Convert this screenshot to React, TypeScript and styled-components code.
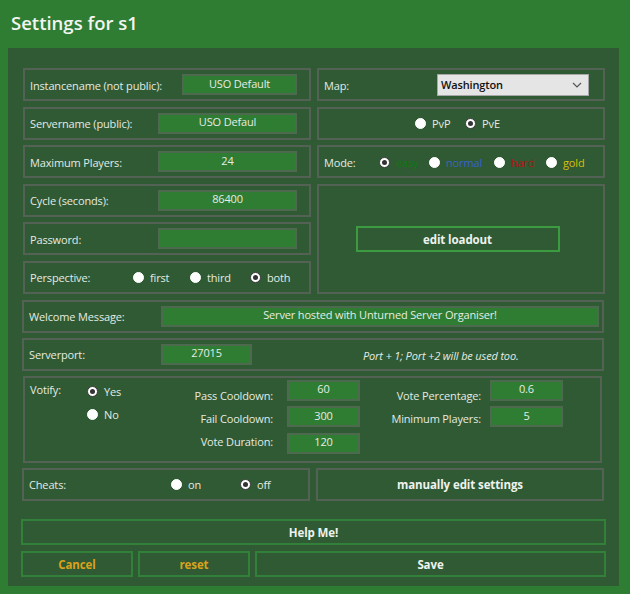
import React from "react";
import styled, { createGlobalStyle } from "styled-components";

const GlobalStyle = createGlobalStyle`
  html, body { margin: 0; padding: 0; }
  body {
    background: #2e7d32;
    font-family: "Open Sans", "Noto Sans", sans-serif;
    font-size: 11px;
    letter-spacing: -0.15px;
    color: #e4ebe4;
  }
`;

const Page = styled.div`
  width: 630px;
  height: 594px;
  display: flex;
  flex-direction: column;
`;

const Header = styled.div`
  height: 48px;
  display: flex;
  align-items: center;
  padding-left: 11px;
  box-sizing: border-box;
`;

const Title = styled.h1`
  margin: 0;
  font-size: 18.5px;
  font-weight: 600;
  letter-spacing: 0;
  color: #f2f5f2;
  padding-bottom: 4px;
`;

const Panel = styled.div`
  margin: 0 11px 0 8px;
  height: 538px;
  background: #2f5a33;
  padding: 20px 15px 0 14px;
  box-sizing: border-box;
  display: flex;
  flex-direction: column;
`;

const TopGrid = styled.div`
  display: grid;
  grid-template-columns: 288px 288px;
  grid-template-rows: repeat(6, 33px);
  column-gap: 6px;
  row-gap: 5.5px;
  margin-left: 1px;
`;

const Box = styled.div<{ $span?: number; $center?: boolean }>`
  border: 2px solid #536254;
  box-sizing: border-box;
  display: flex;
  align-items: center;
  justify-content: ${(p) => (p.$center ? "center" : "flex-start")};
  padding: 0 12px 0 5px;
  ${(p) => (p.$span ? `grid-row: span ${p.$span};` : "")}
`;

const Label = styled.span<{ $w?: number }>`
  white-space: nowrap;
  padding-top: 1px;
  ${(p) => (p.$w ? `width: ${p.$w}px; flex-shrink: 0;` : "")}
`;

const TextInput = styled.div<{ $w: number; $ml?: number }>`
  width: ${(p) => p.$w}px;
  height: 21px;
  margin-left: ${(p) => (p.$ml !== undefined ? `${p.$ml}px` : "auto")};
  box-sizing: border-box;
  background: #2e7d32;
  border: 2px solid #4d6a4f;
  display: flex;
  align-items: center;
  justify-content: center;
  color: #e6ece6;
  padding-bottom: 3px;
  white-space: nowrap;
  overflow: hidden;
  flex-shrink: 0;
`;

const RadioRow = styled.div`
  display: flex;
  align-items: center;
  padding-top: 1px;
`;

const Option = styled.label<{ $w?: number; $color?: string }>`
  display: flex;
  align-items: center;
  gap: 6px;
  ${(p) => (p.$w ? `width: ${p.$w}px;` : "")}
  color: ${(p) => p.$color || "#e4ebe4"};
  white-space: nowrap;
`;

const Dot = styled.span<{ $on?: boolean }>`
  width: 11px;
  height: 11px;
  border-radius: 50%;
  box-sizing: border-box;
  background: #ffffff;
  border: ${(p) => (p.$on ? "1.5px solid #3a3a3a" : "1px solid #fff")};
  display: flex;
  align-items: center;
  justify-content: center;
  flex-shrink: 0;
  &::after {
    content: "";
    width: 5px;
    height: 5px;
    border-radius: 50%;
    background: ${(p) => (p.$on ? "#333" : "transparent")};
  }
`;

const Radio = ({ on, label, w, color }: { on?: boolean; label: string; w?: number; color?: string }) => (
  <Option $w={w} $color={color}>
    <Dot $on={on} />
    <span>{label}</span>
  </Option>
);

const Select = styled.div`
  margin-left: auto;
  margin-right: 2px;
  width: 152px;
  height: 22px;
  box-sizing: border-box;
  background: #e5e5e5;
  border: 1px solid #a6a6a6;
  display: flex;
  align-items: center;
  justify-content: space-between;
  padding: 0 6px 0 3px;
  color: #111;
  font-weight: 600;
`;

const OutlineButton = styled.button<{ $w?: number; $color?: string; $border?: string }>`
  ${(p) => (p.$w ? `width: ${p.$w}px;` : "")}
  height: 26px;
  box-sizing: border-box;
  background: transparent;
  border: 2px solid ${(p) => p.$border || "#3b9240"};
  color: ${(p) => p.$color || "#eef2ee"};
  font-family: inherit;
  font-size: 11.5px;
  letter-spacing: -0.1px;
  font-weight: 700;
  cursor: pointer;
  padding: 1px 0 0;
`;

const Section = styled.div`
  display: flex;
  flex-direction: column;
  gap: 5px;
  margin-top: 6px;
`;

const WideBox = styled(Box)`
  height: 33px;
  padding-right: 1px;
`;

const Note = styled.span`
  font-style: italic;
  margin-left: 111px;
  padding-top: 2px;
  white-space: nowrap;
`;

const VoteBox = styled.div`
  height: 87px;
  border: 2px solid #536254;
  box-sizing: border-box;
  display: flex;
  align-items: flex-start;
  padding: 2px 0 0 5px;
  margin-right: 2px;
  margin-left: 1px;
`;

const VoteTitle = styled.span`
  width: 57px;
  flex-shrink: 0;
  line-height: 16px;
  padding-top: 2px;
`;

const VoteRadios = styled.div`
  width: 73px;
  flex-shrink: 0;
  display: flex;
  flex-direction: column;
  gap: 7px;
  padding-top: 4px;
  line-height: 16px;
`;

const LabelColumn = styled.div<{ $w: number; $pr: number }>`
  width: ${(p) => p.$w}px;
  box-sizing: border-box;
  padding-right: ${(p) => p.$pr}px;
  padding-top: 4.5px;
  flex-shrink: 0;
  display: flex;
  flex-direction: column;
  align-items: flex-end;
  line-height: 23px;
  white-space: nowrap;
`;

const InputColumn = styled.div`
  display: flex;
  flex-direction: column;
  gap: 5.5px;
  flex-shrink: 0;
`;

const CheatRow = styled.div`
  display: grid;
  grid-template-columns: 288px 288px;
  column-gap: 6px;
  height: 33px;
`;

const Footer = styled.div`
  display: flex;
  flex-direction: column;
  gap: 6px;
  margin-top: 18px;
  margin-left: -1px;
  margin-right: -2px;
`;

const ButtonRow = styled.div`
  display: flex;
  gap: 5px;
`;

const Chevron = () => (
  <svg width="10" height="6" viewBox="0 0 10 6">
    <path d="M1 1 L5 5 L9 1" fill="none" stroke="#555" strokeWidth="1.2" />
  </svg>
);

export default function App() {
  return (
    <>
      <GlobalStyle />
      <Page>
        <Header>
          <Title>Settings for s1</Title>
        </Header>
        <Panel>
          <TopGrid>
            <Box>
              <Label>Instancename (not public):</Label>
              <TextInput $w={115}>USO Default</TextInput>
            </Box>
            <Box>
              <Label>Map:</Label>
              <Select>
                <span>Washington</span>
                <Chevron />
              </Select>
            </Box>
            <Box>
              <Label>Servername (public):</Label>
              <TextInput $w={139}>USO Defaul</TextInput>
            </Box>
            <Box $center>
              <RadioRow>
                <Radio label="PvP" w={50} />
                <Radio label="PvE" on />
              </RadioRow>
            </Box>
            <Box>
              <Label>Maximum Players:</Label>
              <TextInput $w={139}>24</TextInput>
            </Box>
            <Box>
              <Label $w={55}>Mode:</Label>
              <RadioRow>
                <Radio label="easy" on w={50} color="#0c7a14" />
                <Radio label="normal" w={65} color="#3a64c8" />
                <Radio label="hard" w={52} color="#b51414" />
                <Radio label="gold" color="#d9be0a" />
              </RadioRow>
            </Box>
            <Box>
              <Label>Cycle (seconds):</Label>
              <TextInput $w={139}>86400</TextInput>
            </Box>
            <Box $span={3} $center>
              <OutlineButton $w={204} $border="#3c9a40">edit loadout</OutlineButton>
            </Box>
            <Box>
              <Label>Password:</Label>
              <TextInput $w={139}></TextInput>
            </Box>
            <Box>
              <Label $w={103}>Perspective:</Label>
              <RadioRow>
                <Radio label="first" w={57} />
                <Radio label="third" w={60} />
                <Radio label="both" on />
              </RadioRow>
            </Box>
          </TopGrid>
          <Section>
            <WideBox>
              <Label $w={132}>Welcome Message:</Label>
              <TextInput $w={438} $ml={0}>Server hosted with Unturned Server Organiser!</TextInput>
            </WideBox>
            <WideBox>
              <Label $w={132}>Serverport:</Label>
              <TextInput $w={91} $ml={0}>27015</TextInput>
              <Note>Port + 1; Port +2 will be used too.</Note>
            </WideBox>
            <VoteBox>
              <VoteTitle>Votify:</VoteTitle>
              <VoteRadios>
                <Radio label="Yes" on />
                <Radio label="No" />
              </VoteRadios>
              <LabelColumn $w={127} $pr={14}>
                <span>Pass Cooldown:</span>
                <span>Fail Cooldown:</span>
                <span>Vote Duration:</span>
              </LabelColumn>
              <InputColumn>
                <TextInput $w={73} $ml={0}>60</TextInput>
                <TextInput $w={73} $ml={0}>300</TextInput>
                <TextInput $w={73} $ml={0}>120</TextInput>
              </InputColumn>
              <LabelColumn $w={130} $pr={9}>
                <span>Vote Percentage:</span>
                <span>Minimum Players:</span>
              </LabelColumn>
              <InputColumn>
                <TextInput $w={73} $ml={0}>0.6</TextInput>
                <TextInput $w={73} $ml={0}>5</TextInput>
              </InputColumn>
            </VoteBox>
            <CheatRow>
              <Box>
                <Label $w={142}>Cheats:</Label>
                <RadioRow>
                  <Radio label="on" w={69} />
                  <Radio label="off" on />
                </RadioRow>
              </Box>
              <Box $center style={{ padding: 0 }}>
                <OutlineButton $border="transparent">manually edit settings</OutlineButton>
              </Box>
            </CheatRow>
          </Section>
          <Footer>
            <OutlineButton $border="#33803a">Help Me!</OutlineButton>
            <ButtonRow>
              <OutlineButton $w={112} $border="#33803a" $color="#d9a21c">Cancel</OutlineButton>
              <OutlineButton $w={112} $border="#33803a" $color="#d9a21c">reset</OutlineButton>
              <OutlineButton style={{ flex: 1 }} $border="#33803a">Save</OutlineButton>
            </ButtonRow>
          </Footer>
        </Panel>
      </Page>
    </>
  );
}
